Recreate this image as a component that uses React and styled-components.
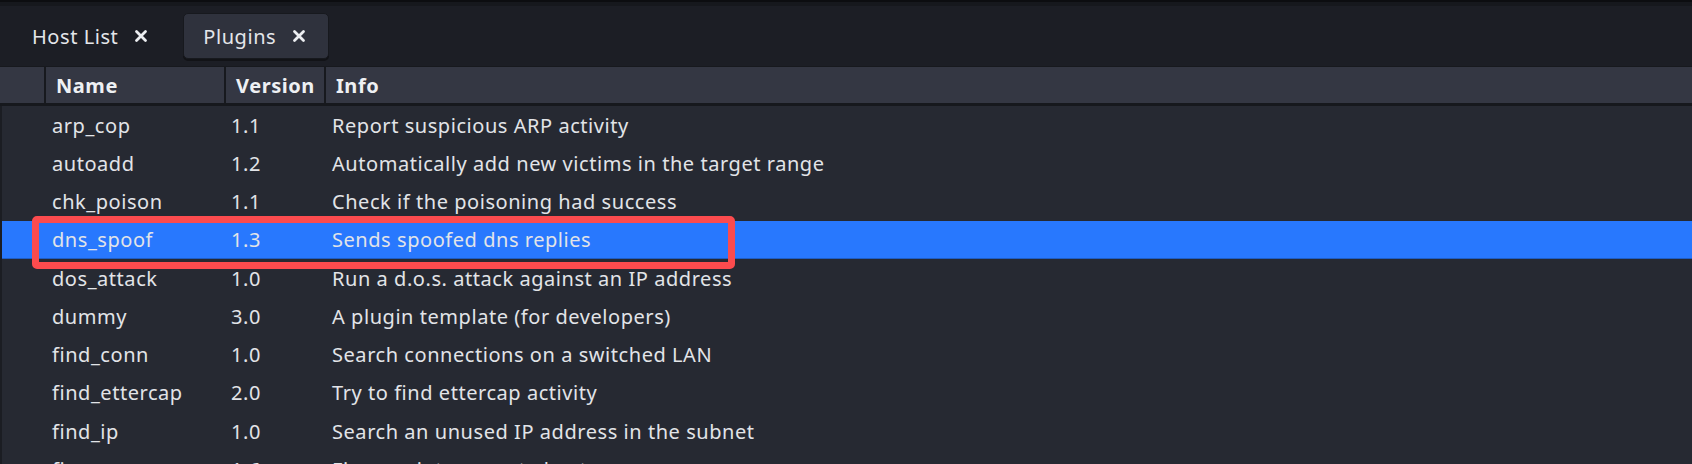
import styled, { createGlobalStyle } from 'styled-components';

const GlobalStyle = createGlobalStyle`
  html, body {
    margin: 0;
    padding: 0;
    background: #1c1e25;
    overflow: hidden;
  }
  body {
    font-family: "Noto Sans", "Open Sans", sans-serif;
    color: #dfe1e6;
    letter-spacing: 0.55px;
  }
`;

const plugins = [
  { name: 'arp_cop', version: '1.1', info: 'Report suspicious ARP activity' },
  { name: 'autoadd', version: '1.2', info: 'Automatically add new victims in the target range' },
  { name: 'chk_poison', version: '1.1', info: 'Check if the poisoning had success' },
  { name: 'dns_spoof', version: '1.3', info: 'Sends spoofed dns replies', selected: true },
  { name: 'dos_attack', version: '1.0', info: 'Run a d.o.s. attack against an IP address' },
  { name: 'dummy', version: '3.0', info: 'A plugin template (for developers)' },
  { name: 'find_conn', version: '1.0', info: 'Search connections on a switched LAN' },
  { name: 'find_ettercap', version: '2.0', info: 'Try to find ettercap activity' },
  { name: 'find_ip', version: '1.0', info: 'Search an unused IP address in the subnet' },
  { name: 'finger', version: '1.6', info: 'Fingerprint a remote host' },
];

const Window = styled.div`
  width: 1692px;
  height: 464px;
  display: flex;
  flex-direction: column;
  border-top: 2px solid #0c0d10;
  box-sizing: border-box;
`;

const TabBar = styled.div`
  flex-shrink: 0;
  height: 64px;
  display: flex;
  align-items: flex-start;
  padding: 7px 0 0 12px;
  gap: 12px;
  background: #1c1e25;
  border-top: 4px solid #16181d;
  box-sizing: border-box;
`;

const Tab = styled.div`
  height: 46px;
  display: flex;
  align-items: center;
  gap: 16px;
  padding: 0 22px 0 19px;
  box-sizing: border-box;
  border-radius: 5px;
  font-size: 20px;
  color: #e4e6ea;
  background: ${p => (p.$active ? '#2f323d' : 'transparent')};
  border: 1px solid ${p => (p.$active ? '#17191e' : 'transparent')};
  box-shadow: ${p => (p.$active ? '0 2px 0 #121317' : 'none')};
`;

const Close = () => (
  <svg width="14" height="14" viewBox="0 0 14 14">
    <path d="M2.5 2.5 L11.5 11.5 M11.5 2.5 L2.5 11.5" stroke="#eceef1" strokeWidth="2.8" strokeLinecap="round" />
  </svg>
);

const Table = styled.div`
  flex: 1;
  min-height: 0;
  display: flex;
  flex-direction: column;
  overflow: hidden;
`;

const HeaderRow = styled.div`
  flex-shrink: 0;
  display: grid;
  grid-template-columns: 44px 178px 98px 1fr;
  column-gap: 2px;
  height: 40px;
  background: #17191e;
  border-top: 1px solid #17191e;
  border-bottom: 3px solid #16181d;
  box-sizing: border-box;
`;

const HeaderCell = styled.div`
  background: #343743;
  display: flex;
  align-items: center;
  padding-left: 10px;
  font-size: 20px;
  font-weight: 700;
  color: #eef0f3;
`;

const Body = styled.div`
  flex: 1;
  min-height: 0;
  background: #262932;
  border-left: 2px solid #1b1d23;
`;

const Row = styled.div`
  position: relative;
  display: grid;
  grid-template-columns: 43px 180px 100px 1fr;
  height: 38.25px;
  align-items: center;
  font-size: 20px;
  color: #e2e4e8;
  background: ${p => (p.$selected ? '#2878fe' : 'transparent')};
  box-shadow: ${p => (p.$selected ? 'inset 0 -1px 0 #1f5dc4' : 'none')};
`;

const Cell = styled.div`
  padding-left: ${p => p.$pad || 7}px;
  white-space: nowrap;
`;

const Highlight = styled.div`
  position: absolute;
  left: 30px;
  top: -5px;
  width: 703px;
  height: 53px;
  border: 7px solid #fb4b4e;
  border-radius: 5px;
  box-sizing: border-box;
  pointer-events: none;
`;

export default function App() {
  return (
    <>
      <GlobalStyle />
      <Window>
        <TabBar>
          <Tab>
            Host List
            <Close />
          </Tab>
          <Tab $active>
            Plugins
            <Close />
          </Tab>
        </TabBar>
        <Table>
          <HeaderRow>
            <HeaderCell />
            <HeaderCell>Name</HeaderCell>
            <HeaderCell>Version</HeaderCell>
            <HeaderCell>Info</HeaderCell>
          </HeaderRow>
          <Body>
            {plugins.map(p => (
              <Row key={p.name} $selected={p.selected}>
                <Cell />
                <Cell>{p.name}</Cell>
                <Cell $pad={6}>{p.version}</Cell>
                <Cell>{p.info}</Cell>
                {p.selected && <Highlight />}
              </Row>
            ))}
          </Body>
        </Table>
      </Window>
    </>
  );
}
